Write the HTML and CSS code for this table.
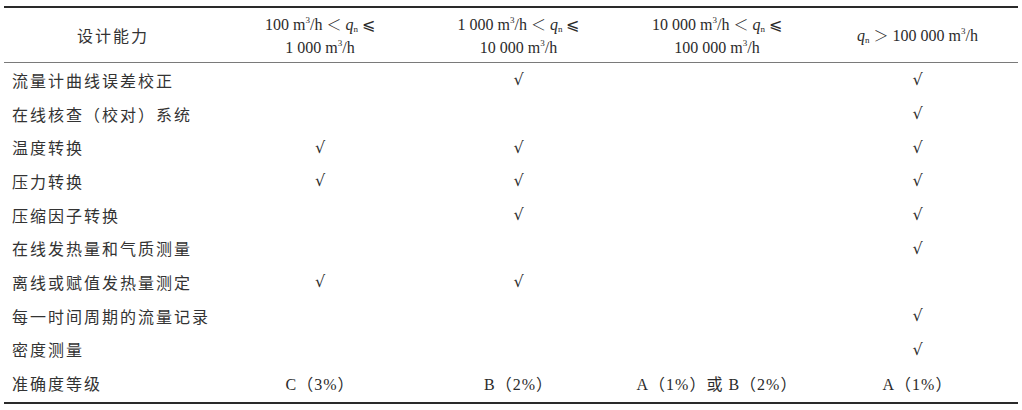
FILE: index.html
```html
<!DOCTYPE html>
<html lang="zh">
<head>
<meta charset="utf-8">
<link rel="stylesheet" href="styles.css">
</head>
<body>
<table class="spec">
  <colgroup>
    <col class="c1"><col class="c2"><col class="c3"><col class="c4"><col class="c5">
  </colgroup>
  <thead>
    <tr>
      <th class="cn">设计能力</th>
      <th><span class="ln">100 m<sup>3</sup>/h <span class="op">＜</span> <i>q</i><sub>n</sub> <span class="le">⩽</span></span><span class="ln">1 000 m<sup>3</sup>/h</span></th>
      <th><span class="ln">1 000 m<sup>3</sup>/h <span class="op">＜</span> <i>q</i><sub>n</sub> <span class="le">⩽</span></span><span class="ln">10 000 m<sup>3</sup>/h</span></th>
      <th><span class="ln">10 000 m<sup>3</sup>/h <span class="op">＜</span> <i>q</i><sub>n</sub> <span class="le">⩽</span></span><span class="ln">100 000 m<sup>3</sup>/h</span></th>
      <th><span class="ln"><i>q</i><sub>n</sub> <span class="op">＞</span> 100 000 m<sup>3</sup>/h</span></th>
    </tr>
  </thead>
  <tbody>
    <tr><td class="cn">流量计曲线误差校正</td><td></td><td class="ck">√</td><td></td><td class="ck">√</td></tr>
    <tr><td class="cn">在线核查（校对）系统</td><td></td><td></td><td></td><td class="ck">√</td></tr>
    <tr><td class="cn">温度转换</td><td class="ck">√</td><td class="ck">√</td><td></td><td class="ck">√</td></tr>
    <tr><td class="cn">压力转换</td><td class="ck">√</td><td class="ck">√</td><td></td><td class="ck">√</td></tr>
    <tr><td class="cn">压缩因子转换</td><td></td><td class="ck">√</td><td></td><td class="ck">√</td></tr>
    <tr><td class="cn">在线发热量和气质测量</td><td></td><td></td><td></td><td class="ck">√</td></tr>
    <tr><td class="cn">离线或赋值发热量测定</td><td class="ck">√</td><td class="ck">√</td><td></td><td></td></tr>
    <tr><td class="cn">每一时间周期的流量记录</td><td></td><td></td><td></td><td class="ck">√</td></tr>
    <tr><td class="cn">密度测量</td><td></td><td></td><td></td><td class="ck">√</td></tr>
    <tr class="last"><td class="cn">准确度等级</td><td class="acc">C（3%）</td><td class="acc">B（2%）</td><td class="acc">A（1%）或 B（2%）</td><td class="acc">A（1%）</td></tr>
  </tbody>
</table>
</body>
</html>
```
FILE: styles.css
```css
html, body {
  margin: 0;
  padding: 0;
  background: #ffffff;
}
body {
  padding: 6px 4px 0 4px;
  color: #2b2b2b;
  font-family: "Liberation Serif", "Noto Sans CJK SC", serif;
}
.spec {
  width: 1014px;
  border-collapse: collapse;
  table-layout: fixed;
  border-top: 2px solid #2a2a2a;
  border-bottom: 2px solid #2a2a2a;
}
.c1 { width: 216px; }
.c2 { width: 200px; }
.c3 { width: 197px; }
.c4 { width: 200px; }
.c5 { width: 201px; }

.spec th {
  height: 54px;
  padding: 0;
  font-weight: normal;
  font-size: 16px;
  line-height: 23px;
  text-align: center;
  vertical-align: middle;
  border-bottom: 1px solid #7a7a7a;
}
.spec th .ln {
  display: block;
  white-space: nowrap;
}
.spec td {
  height: 33.7px;
  padding: 0;
  font-size: 16px;
  text-align: center;
  vertical-align: middle;
}
.spec .cn {
  font-family: "Noto Sans CJK SC", sans-serif;
  font-size: 16px;
  letter-spacing: 2px;
  font-weight: normal;
  color: #333;
}
.spec td.cn {
  text-align: left;
  padding-left: 8px;
}
.spec th.cn {
  padding-left: 2px;
}
sup {
  font-size: 9px;
  vertical-align: 7px;
  line-height: 0;
}
sub {
  font-size: 9px;
  vertical-align: -2px;
  line-height: 0;
}
.op {
  font-family: "Noto Sans CJK SC", sans-serif;
  font-size: 15px;
  font-weight: 300;
}
.le {
  font-family: "DejaVu Sans", sans-serif;
  font-size: 16px;
  font-weight: 200;
}
.ck {
  font-family: "DejaVu Serif", serif;
  font-size: 12px;
  padding-top: 2px;
}
.acc {
  font-family: "Liberation Serif", "Noto Sans CJK SC", serif;
  font-size: 16px;
  letter-spacing: 1px;
}
.last td {
  padding-bottom: 2px;
}
```
